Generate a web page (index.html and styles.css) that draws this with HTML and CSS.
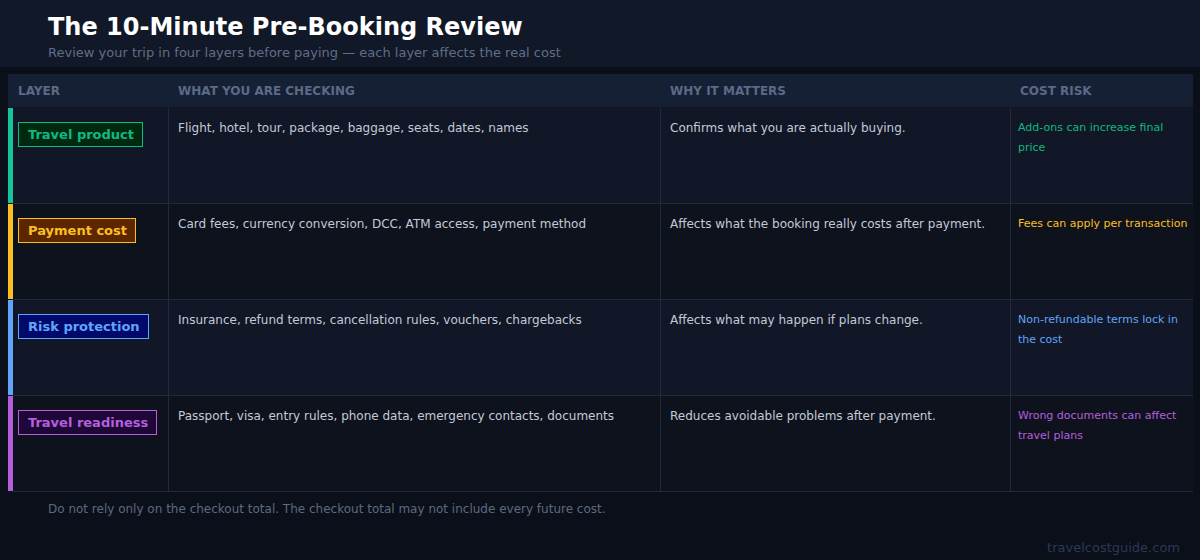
FILE: index.html
```html
<!DOCTYPE html>
<html lang="en">
<head>
<meta charset="utf-8">
<title>The 10-Minute Pre-Booking Review</title>
<link rel="stylesheet" href="styles.css">
</head>
<body>
<header class="top">
  <h1 class="title">The 10-Minute Pre-Booking Review</h1>
  <p class="subtitle">Review your trip in four layers before paying — each layer affects the real cost</p>
</header>

<section class="table">
  <div class="thead">
    <div class="th th-layer">LAYER</div>
    <div class="th">WHAT YOU ARE CHECKING</div>
    <div class="th">WHY IT MATTERS</div>
    <div class="th">COST RISK</div>
  </div>

  <div class="row row-odd green">
    <div class="bar"></div>
    <div class="cell cell-layer"><span class="badge">Travel product</span></div>
    <div class="cell">Flight, hotel, tour, package, baggage, seats, dates, names</div>
    <div class="cell">Confirms what you are actually buying.</div>
    <div class="cell risk">Add-ons can increase final price</div>
  </div>

  <div class="row row-even amber">
    <div class="bar"></div>
    <div class="cell cell-layer"><span class="badge">Payment cost</span></div>
    <div class="cell">Card fees, currency conversion, DCC, ATM access, payment method</div>
    <div class="cell">Affects what the booking really costs after payment.</div>
    <div class="cell risk">Fees can apply per transaction</div>
  </div>

  <div class="row row-odd blue">
    <div class="bar"></div>
    <div class="cell cell-layer"><span class="badge">Risk protection</span></div>
    <div class="cell">Insurance, refund terms, cancellation rules, vouchers, chargebacks</div>
    <div class="cell">Affects what may happen if plans change.</div>
    <div class="cell risk">Non-refundable terms lock in the cost</div>
  </div>

  <div class="row row-even purple">
    <div class="bar"></div>
    <div class="cell cell-layer"><span class="badge">Travel readiness</span></div>
    <div class="cell">Passport, visa, entry rules, phone data, emergency contacts, documents</div>
    <div class="cell">Reduces avoidable problems after payment.</div>
    <div class="cell risk">Wrong documents can affect travel plans</div>
  </div>
</section>

<p class="note">Do not rely only on the checkout total. The checkout total may not include every future cost.</p>
<div class="brand">travelcostguide.com</div>
</body>
</html>
```

FILE: styles.css
```css
* { box-sizing: border-box; }

html, body {
  margin: 0;
  padding: 0;
}

body {
  width: 1200px;
  height: 560px;
  overflow: hidden;
  background: #0b0f19;
  font-family: "DejaVu Sans", "Liberation Sans", sans-serif;
  color: #cbd5e1;
}

.top {
  height: 67px;
  background: #111827;
  padding: 12px 48px 0;
}

.title {
  margin: 0;
  font-size: 24px;
  line-height: 30px;
  font-weight: bold;
  color: #ffffff;
}

.subtitle {
  margin: 3px 0 0;
  font-size: 13px;
  line-height: 16px;
  color: #5f6e88;
}

.table {
  margin: 7px 0 0 8px;
  width: 1185px;
}

.thead {
  display: grid;
  grid-template-columns: 161px 492px 350px 182px;
  height: 34px;
  background: #162035;
  border-bottom: 1px solid #0f1626;
}

.th {
  padding: 10px 9px 0;
  font-size: 12px;
  line-height: 14px;
  font-weight: bold;
  color: #5b6a86;
}

.th-layer { padding-left: 10px; }

.row {
  display: grid;
  grid-template-columns: 5px 156px 492px 350px 182px;
  height: 96px;
}

.row-odd { background: #111726; }
.row-even { background: #0e121d; }

.bar { background: var(--c); height: 95px; }

.cell {
  border-bottom: 1px solid #1f2a3c;
  border-right: 1px solid #1f2a3c;
  padding: 11px 9px 0;
  font-size: 12px;
  line-height: 18px;
  color: #c3cad6;
}

.cell:last-child { border-right: none; }

.cell-layer { padding: 14px 5px 0; }

.badge {
  display: inline-block;
  height: 25px;
  padding: 0 8px 0 9px;
  border: 1px solid var(--c);
  background: var(--bg);
  color: var(--c);
  font-size: 13px;
  line-height: 23px;
  font-weight: bold;
}

.risk {
  font-size: 11px;
  line-height: 20px;
  padding: 10px 2px 0 7px;
  color: var(--c);
}

.green  { --c: #10b981; --bg: #002a10; }
.green .bar { background: #14c49a; }
.amber  { --c: #fbbf24; --bg: #5c2600; }
.blue   { --c: #60a5fa; --bg: #010a6a; }
.purple { --c: #b55fdd; --bg: #1e0838; }

.note {
  margin: 10px 0 0 48px;
  font-size: 12px;
  line-height: 14px;
  color: #5e6a80;
}

.brand {
  margin: 24px 20px 0 0;
  text-align: right;
  font-size: 13px;
  line-height: 16px;
  color: #2b3954;
}
```
